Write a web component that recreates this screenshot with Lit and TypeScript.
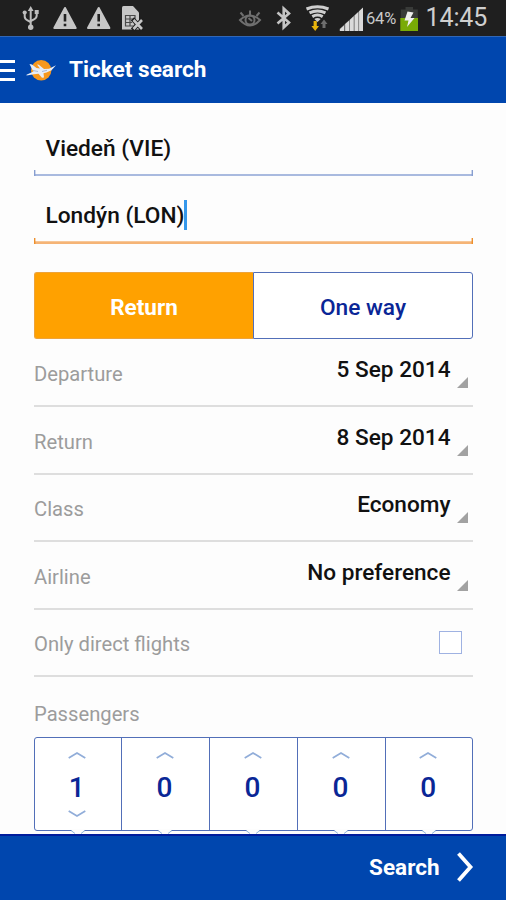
import { LitElement, html, css, svg } from "lit";
import { customElement, state } from "lit/decorators.js";

interface Row {
  label: string;
  value: string;
}

@customElement("status-bar")
export class StatusBar extends LitElement {
  static styles = css`
    :host {
      display: flex;
      box-sizing: border-box;
      height: 36px;
      background: #1f1f1f;
      color: #c9c9c9;
      font-family: Roboto, sans-serif;
    }
    svg {
      display: block;
      flex: none;
    }
    .notes {
      width: 234px;
    }
    .battery {
      font-size: 16.5px;
      line-height: 37px;
      letter-spacing: -0.2px;
      width: 34px;
      white-space: nowrap;
    }
    .clock {
      font-size: 25px;
      line-height: 36px;
      letter-spacing: -0.1px;
      white-space: nowrap;
      color: #cfcfcf;
    }
  `;

  render() {
    const warning = (x: number) => svg`
      <path d="M${x} 8 L${x + 10.7} 28 H${x - 10.7} Z" fill="#c6c6c6" stroke="#c6c6c6" stroke-width="2" stroke-linejoin="round"/>
      <path d="M${x} 14 V21.5 M${x} 23.7 V26.2" stroke="#222" stroke-width="2.6"/>`;
    return html`
      <svg class="notes" width="234" height="36" viewBox="0 0 234 36">
        <g fill="none" stroke="#bdbdbd" stroke-width="2">
          <path d="M30.7 9 V27"/>
          <path d="M24.7 13 V16.5 Q24.7 19 27.5 20.3 L30.7 22"/>
          <path d="M36.7 12 V15.5 Q36.7 18 34 19.3 L30.7 21"/>
        </g>
        <path d="M30.7 6 L33.6 11 H27.8 Z M34.7 10 h4 v4 h-4 Z" fill="#bdbdbd"/>
        <circle cx="24.7" cy="12.5" r="2.1" fill="#bdbdbd"/>
        <circle cx="30.7" cy="27.3" r="2.7" fill="#bdbdbd"/>
        ${warning(65)}${warning(98.7)}
        <path d="M123.500 6 H133 L139 12.500 V29.500 H122 V7.500 Q122 6 123.500 6 Z" fill="#c6c6c6"/>
        <path d="M125.5 15.5 H135 V26 H125.5 Z M125.5 19 H135 M125.5 22.5 H132 M130 15.5 V26" fill="none" stroke="#494949" stroke-width="1.2"/>
        <path d="M134 20.500 L141.500 28.500 M141.500 20.500 L134 28.500" stroke="#1f1f1f" stroke-width="4.5" stroke-linecap="square"/>
        <path d="M133.500 20 L142 29 M142 20 L133.500 29" stroke="#c6c6c6" stroke-width="2.6"/>
      </svg>
      <svg width="132" height="36" viewBox="234 0 132 36">
        <g fill="none" stroke="#6f6f6f" stroke-width="2">
          <path d="M240 20 Q250 11 260 20 Q250 31 240 20 Z"/>
          <circle cx="250" cy="20" r="4.5"/>
          <path d="M250 15 V10.5 M243.5 16 L240.5 12.5 M256.500 16 L259.500 12.500"/>
        </g>
        <path d="M248.500 18 L252 21" stroke="#6f6f6f" stroke-width="2"/>
        <path d="M277.500 12.500 L289 22.500 L283.700 27.500 V8.500 L289 13.500 L277.500 23.500" fill="none" stroke="#c4c4c4" stroke-width="2.600"/>
        <g fill="none" stroke="#cecece" stroke-width="3">
          <path d="M306.500 9 Q317.500 4.500 328.500 9"/>
          <path d="M309.500 12.900 Q317.500 9 325.500 12.900"/>
          <path d="M312.300 16.600 Q317.500 13.600 322.700 16.600"/>
        </g>
        <path d="M314.300 19 Q317.500 17.200 320.700 19 L317.500 22 Z" fill="#cecece"/>
        <path d="M313.600 21 h3.200 v5 h2.200 l-3.800 5 l-3.800 -5 h2.200 Z" fill="#e9b50c"/>
        <path d="M322.500 28 v-4 h-2 l3.500 -4.500 l3.500 4.500 h-2 v4 Z" fill="#6e6e6e"/>
        <path d="M339.500 31 V29 L362.500 8 V31 Z" fill="#6f6f6f"/>
        <path d="M340 31 v-2 l4 -3.600 v5.600 Z M345.200 31 v-7 l4 -3.500 V31 Z M350 31 V19.700 l3.700 -3.400 V31 Z M354.600 31 V15.400 l3.700 -3.400 V31 Z M359.100 31 V11.200 l3.900 -3.600 V31 Z" fill="#dadada"/>
      </svg>
      <span class="battery">64%</span>
      <svg width="25.500" height="36" viewBox="400 0 25.500 36">
        <path d="M405.500 7 h7.500 v2.500 h4.800 V18 h-17 V9.500 h4.700 Z" fill="#393b39"/>
        <rect x="400.300" y="18" width="17.700" height="13" fill="#79ab06"/>
        <path d="M407.500 11.500 L404.500 20.500 H408.500 L407 27 L414.500 18 H410.500 L413.500 12.500 Z" fill="#efefef"/>
      </svg>
      <span class="clock">14:45</span>
    `;
  }
}

@customElement("passenger-stepper")
export class PassengerStepper extends LitElement {
  static properties = { counts: { attribute: false } };
  declare counts: number[];

  static styles = css`
    :host {
      display: block;
    }
    .box {
      display: grid;
      grid-template-columns: 86.500px repeat(3, 88px) 86.500px;
      box-sizing: border-box;
      width: 439px;
      height: 94px;
      border: 1.500px solid #526fb8;
      border-radius: 3px;
      background: #fff;
    }
    .cell {
      position: relative;
      box-sizing: border-box;
      display: flex;
      flex-direction: column;
      align-items: center;
      border-right: 1.500px solid #526fb8;
      padding: 13px 1px 0 0;
      color: #0a2696;
      font: 500 28px/30px Roboto, sans-serif;
    }
    .cell:last-child {
      border-right: 0;
    }
    .num {
      margin: 14px 0 7px;
    }
    .one {
      padding-right: 1px;
    }
    svg {
      display: block;
    }
    .notch {
      position: absolute;
      left: calc(50% - 8px);
      bottom: -4px;
      z-index: 1;
    }
  `;

  render() {
    return html`<div class="box">
      ${this.counts.map(
        (n) => html`<div class="cell">
          <svg width="18" height="8" viewBox="0 0 18 8"><path d="M.7 7 L9 2 L17.300 7" fill="none" stroke="#91add9" stroke-width="1.700"/></svg>
          <span class="num ${n === 1 ? "one" : ""}">${n}</span>
          ${n > 0
            ? html`<svg width="18" height="8" viewBox="0 0 18 8"><path d="M.7 1 L9 6 L17.300 1" fill="none" stroke="#91add9" stroke-width="1.700"/></svg>`
            : ""}
          <svg class="notch" width="16" height="5" viewBox="0 0 16 5"><path d="M0 0 H16 L11 4.500 H5 Z" fill="#fdfdfd"/><path d="M1 1.500 L5 4.500 M15 1.500 L11 4.500" stroke="#8fb4da"/></svg>
        </div>`
      )}
    </div>`;
  }
}

@customElement("app-root")
export class AppRoot extends LitElement {
  @state() private rows: Row[] = [
    { label: "Departure", value: "5 Sep 2014" },
    { label: "Return", value: "8 Sep 2014" },
    { label: "Class", value: "Economy" },
    { label: "Airline", value: "No preference" },
  ];

  static styles = css`
    :host {
      display: flex;
      flex-direction: column;
      height: 900px;
      overflow: hidden;
      background: #fdfdfd;
      font-family: Roboto, sans-serif;
      color: #111;
    }
    * {
      box-sizing: border-box;
    }
    svg {
      display: block;
      flex: none;
    }
    header {
      display: flex;
      align-items: center;
      height: 66.500px;
      flex: none;
      background: #0046ae;
      border-top: 1.500px solid #3167b6;
      color: #fff;
    }
    .title {
      font-weight: 700;
      font-size: 22.600px;
      line-height: 30px;
      padding: 1px 0 0 12px;
    }
    main {
      flex: 1;
      min-height: 0;
      padding: 0 33px 0 34px;
    }
    .field {
      display: flex;
      align-items: center;
      height: 67.500px;
      padding: 12.500px 0 0 11.500px;
      font-weight: 500;
      font-size: 22.700px;
      line-height: 30px;
    }
    .first {
      margin-top: 6px;
    }
    .field + svg {
      margin-top: -6px;
    }
    .caret {
      width: 2.300px;
      height: 30px;
      background: #3498ec;
      margin-top: -2px;
    }
    .toggle {
      display: grid;
      grid-template-columns: 219px 220px;
      grid-template-rows: 67px;
      height: 67px;
      margin: 28px 0 1px;
      font-weight: 700;
      font-size: 22.500px;
      line-height: 69px;
      text-align: center;
    }
    .on {
      background: #ffa100;
      color: #fff;
      border-radius: 3px 0 0 3px;
      border: 1px solid #eda33a;
      border-right: 0;
    }
    .off {
      border: 1.500px solid #526fb8;
      border-left-width: 1px;
      border-radius: 0 3px 3px 0;
      color: #0a2696;
      background: #fff;
      font-weight: 500;
      font-size: 22.700px;
    }
    .row {
      display: flex;
      height: 67.600px;
      border-bottom: 2px solid #dedede;
      font-size: 20.200px;
      line-height: 30px;
      color: #9c9c9c;
      padding-top: 19.500px;
    }
    .value {
      margin-left: auto;
      margin-top: -4px;
      font-weight: 500;
      font-size: 22.600px;
      color: #111;
      padding-right: 6.500px;
    }
    .corner {
      margin: 18px 5px 0 0;
    }
    .check {
      width: 23px;
      height: 23px;
      border: 1.500px solid #9fb2e2;
      background: #fff;
      margin: 2px 11px 0 auto;
    }
    .label {
      font-size: 20.200px;
      line-height: 30px;
      color: #9c9c9c;
      margin: 22px 0 8px;
    }
    footer {
      flex: none;
      display: flex;
      align-items: center;
      justify-content: flex-end;
      height: 66px;
      background: #0046ae;
      border-top: 2px solid #001c9c;
      color: #fff;
      font-weight: 700;
      font-size: 22.500px;
      padding: 0 32px 2px 0;
      gap: 16.500px;
    }
  `;

  private underline(color: string, edge: string, width: number) {
    return html`<svg width="439" height="6" viewBox="0 0 439 6">
      <path d="M0 ${6 - width / 2} H439" stroke=${color} stroke-width=${width} />
      <path d="M.7 0 V6 M438.300 0 V6" stroke=${edge} stroke-width="1.400" />
    </svg>`;
  }

  render() {
    return html`
      <status-bar></status-bar>
      <header>
        <svg width="15" height="24" viewBox="0 0 15 24"><path d="M0 3.500 H15 M0 12.500 H15 M0 21.500 H15" stroke="#fff" stroke-width="3"/></svg>
        <svg width="42" height="30" viewBox="15 55 42 30">
          <circle cx="41.200" cy="70.200" r="10.200" fill="#f7981d"/>
          <path d="M29.500 64 L32 64.500 L36.500 68 L40 68.500 L37 64.500 L38.800 64.800 L44 69 L49 68.800 L56 65.300 L51.500 70.300 L46.500 72.500 L43.500 73.200 L44 77.500 L42 77.800 L38.500 73.800 L34 74.300 L26.500 75.500 L26.500 74.700 L33.500 71.500 L32 69 Z" fill="#e8edf6"/>
          <path d="M33 70.500 L38 71.500 M42 71.500 L47 70.300" stroke="#8aa0c6" stroke-width=".7"/>
        </svg>
        <span class="title">Ticket search</span>
      </header>
      <main>
        <div class="field first">Viedeň (VIE)</div>
        ${this.underline("#a9badf", "#879ed0", 2)}
        <div class="field">Londýn (LON)<span class="caret"></span></div>
        ${this.underline("#f5b476", "#ed8f2c", 2.8)}
        <div class="toggle">
          <div class="on">Return</div>
          <div class="off">One way</div>
        </div>
        ${this.rows.map(
          (r) => html`<div class="row">
            <span>${r.label}</span>
            <span class="value">${r.value}</span>
            <svg class="corner" width="11" height="11" viewBox="0 0 11 11"><path d="M11 0 V11 H0 Z" fill="#a2a2a2"/></svg>
          </div>`
        )}
        <div class="row">
          <span>Only direct flights</span>
          <span class="check"></span>
        </div>
        <div class="label">Passengers</div>
        <passenger-stepper .counts=${[1, 0, 0, 0, 0]}></passenger-stepper>
      </main>
      <footer>
        <span>Search</span>
        <svg width="18" height="30" viewBox="0 0 18 30"><path d="M2.500 1.500 L14.500 15 L2.500 28.500" fill="none" stroke="#fff" stroke-width="3.800"/></svg>
      </footer>
    `;
  }
}
